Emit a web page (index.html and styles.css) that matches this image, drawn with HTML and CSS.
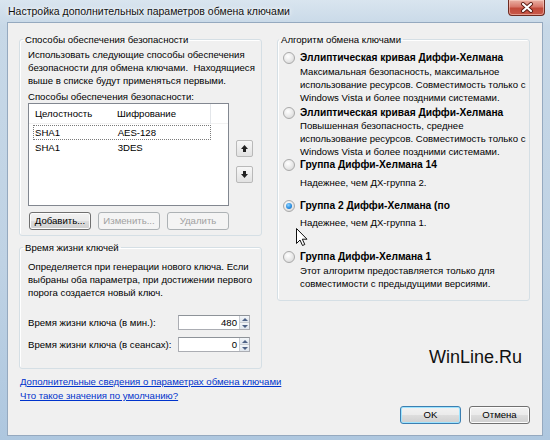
FILE: index.html
```html
<!DOCTYPE html>
<html lang="ru">
<head>
<meta charset="utf-8">
<title>Настройка дополнительных параметров обмена ключами</title>
<link rel="stylesheet" href="styles.css">
</head>
<body>
<div class="window">
  <div class="titlebar">
    <span class="title">Настройка дополнительных параметров обмена ключами</span>
    <button class="close" aria-label="Закрыть">
      <svg width="14" height="11" viewBox="0 0 14 11"><path d="M3 2 L11 9 M11 2 L3 9" stroke="#5a1a12" stroke-width="4" stroke-linecap="round"/><path d="M3 2 L11 9 M11 2 L3 9" stroke="#fff" stroke-width="2.2" stroke-linecap="round"/></svg>
    </button>
  </div>
  <div class="client">
    <div class="col-left">
      <fieldset class="group">
        <legend>Способы обеспечения безопасности</legend>
        <div class="gbody gbody-methods">
          <p class="desc">Использовать следующие способы обеспечения<br>безопасности для обмена ключами.&nbsp; Находящиеся<br>выше в списке будут применяться первыми.</p>
          <p class="caption">Способы обеспечения безопасности:</p>
          <div class="list-row">
            <div class="listbox">
              <div class="lv-head"><span class="c1">Целостность</span><span class="c2">Шифрование</span><span class="c3"></span></div>
              <div class="lv-item focus"><span class="c1">SHA1</span><span class="c2">AES-128</span></div>
              <div class="lv-item"><span class="c1">SHA1</span><span class="c2">3DES</span></div>
            </div>
            <div class="movers">
              <button class="mover" aria-label="Вверх"><svg width="15" height="15" viewBox="0 0 15 15"><path d="M7.5 4 L11 8 H9 V11 H6 V8 H4 Z" fill="#222"/></svg></button>
              <button class="mover" aria-label="Вниз"><svg width="15" height="15" viewBox="0 0 15 15"><path d="M7.5 11 L11 7 H9 V4 H6 V7 H4 Z" fill="#222"/></svg></button>
            </div>
          </div>
          <div class="btn-row">
            <button class="btn">Добавить...</button>
            <button class="btn" disabled>Изменить...</button>
            <button class="btn" disabled>Удалить</button>
          </div>
        </div>
      </fieldset>
      <fieldset class="group group-life">
        <legend>Время жизни ключей</legend>
        <div class="gbody gbody-life">
          <p class="desc">Определяется при генерации нового ключа. Если<br>выбраны оба параметра, при достижении первого<br>порога создается новый ключ.</p>
          <div class="field field-first">
            <span class="flabel">Время жизни ключа (в мин.):</span>
            <div class="spin"><span class="val">480</span><span class="arrows"><span class="ar ar-up"></span><span class="ar ar-down"></span></span></div>
          </div>
          <div class="field">
            <span class="flabel">Время жизни ключа (в сеансах):</span>
            <div class="spin"><span class="val">0</span><span class="arrows"><span class="ar ar-up"></span><span class="ar ar-down"></span></span></div>
          </div>
        </div>
      </fieldset>
      <div class="links">
        <a href="#">Дополнительные сведения о параметрах обмена ключами</a>
        <a href="#">Что такое значения по умолчанию?</a>
      </div>
    </div>
    <div class="col-right">
      <fieldset class="group group-algo">
        <legend>Алгоритм обмена ключами</legend>
        <div class="gbody gbody-algo">
          <div class="opt opt-1">
            <span class="radio"></span>
            <span class="opt-title">Эллиптическая кривая Диффи-Хелмана</span>
            <span class="opt-desc">Максимальная безопасность, максимальное<br>использование ресурсов. Совместимость только с<br>Windows Vista и более поздними системами.</span>
          </div>
          <div class="opt opt-2">
            <span class="radio"></span>
            <span class="opt-title">Эллиптическая кривая Диффи-Хелмана</span>
            <span class="opt-desc">Повышенная безопасность, среднее<br>использование ресурсов. Совместимость только с<br>Windows Vista и более поздними системами.</span>
          </div>
          <div class="opt opt-3">
            <span class="radio"></span>
            <span class="opt-title">Группа Диффи-Хелмана 14</span>
            <span class="opt-desc">Надежнее, чем ДХ-группа 2.</span>
          </div>
          <div class="opt opt-4">
            <span class="radio checked"></span>
            <span class="opt-title">Группа 2 Диффи-Хелмана (по</span>
            <span class="opt-desc">Надежнее, чем ДХ-группа 1.</span>
          </div>
          <div class="opt opt-5">
            <span class="radio"></span>
            <span class="opt-title">Группа Диффи-Хелмана 1</span>
            <span class="opt-desc">Этот алгоритм предоставляется только для<br>совместимости с предыдущими версиями.</span>
          </div>
        </div>
      </fieldset>
      <div class="dlg-buttons">
        <button class="btn btn-default">OK</button>
        <button class="btn">Отмена</button>
      </div>
    </div>
    <div class="watermark">WinLine.Ru</div>
    <svg class="cursor" width="12" height="19" viewBox="0 0 12 19"><path d="M0.5 0.5 V15.5 L4 12 L6.5 17.5 L8.8 16.5 L6.3 11.2 H11 Z" fill="#fff" stroke="#111" stroke-width="1" stroke-linejoin="round"/></svg>
  </div>
</div>
</body>
</html>
```
FILE: styles.css
```css
* { box-sizing: border-box; }

html, body {
  margin: 0;
  padding: 0;
}

body {
  width: 550px;
  height: 440px;
  overflow: hidden;
  font-family: "Liberation Sans", Arial, sans-serif;
  font-size: 9.6px;
  color: #000;
}

.window {
  width: 550px;
  height: 440px;
  display: flex;
  flex-direction: column;
  padding: 0 7px 4px 7px;
  background: linear-gradient(180deg, #d9e5ef 0%, #c7d8e7 6%, #bfd2e4 60%, #aec7df 100%);
}

.titlebar {
  height: 22px;
  display: flex;
  align-items: flex-start;
  justify-content: space-between;
  padding-left: 1px;
}

.title {
  font-size: 10.5px;
  line-height: 23px;
  color: #111;
  text-shadow: 0 0 6px #fff, 0 0 3px #fff;
}

.close {
  width: 37px;
  height: 16px;
  margin-right: -2px;
  padding: 0;
  border: 1px solid #6e2b21;
  border-top: none;
  border-radius: 0 0 4px 4px;
  background: linear-gradient(180deg, #eab1a4 0%, #d8776a 45%, #c24a3a 55%, #c8594a 100%);
  box-shadow: inset 0 0 0 1px rgba(255, 220, 210, 0.5);
  display: flex;
  align-items: center;
  justify-content: center;
}

.client {
  position: relative;
  flex: 1;
  background: #f0f0f0;
  border: 1px solid #95a9bf;
  display: grid;
  grid-template-columns: 243px 253px;
  column-gap: 15px;
  padding: 10px 0 0 11px;
}

.col-left, .col-right {
  display: flex;
  flex-direction: column;
}

.group {
  margin: 0;
  padding: 0;
  min-width: 0;
  border: 1px solid #d5dfe5;
  border-radius: 3px;
  box-shadow: inset 1px 1px 0 #fff;
}

.group legend {
  margin-left: 3px;
  padding: 0 2px;
  line-height: 13px;
  color: #000;
}

.group-algo legend {
  margin-left: 1px;
}

.group-life {
  margin-top: 5px;
}

.gbody-methods {
  padding: 2px 8px 5px 8px;
}

.gbody-life {
  padding: 6px 8px 16px 8px;
}

.gbody-algo {
  padding: 5px 5px 10px 5px;
}

.desc, .caption {
  margin: 0;
  line-height: 13px;
  white-space: nowrap;
}

.caption {
  margin-top: 3px;
}

.list-row {
  display: flex;
  align-items: flex-start;
}

.listbox {
  width: 201px;
  height: 103px;
  background: #fff;
  border: 1px solid #828790;
}

.lv-head {
  height: 20px;
  display: flex;
  align-items: center;
  border-bottom: 1px solid #f2f2f2;
}

.lv-head span {
  height: 20px;
  line-height: 20px;
}

.c1 {
  width: 83px;
  padding-left: 6px;
}

.c2 {
  width: 99px;
  padding-left: 5px;
}

.lv-head .c2 {
  border-right: 1px solid #e3e6ea;
}

.lv-head .c3 {
  flex: 1;
}

.lv-item {
  height: 15px;
  line-height: 13px;
  display: flex;
  margin: 0 17px 0 4px;
  border: 1px dotted transparent;
}

.lv-item .c1 {
  width: 80px;
  padding-left: 1px;
}

.lv-item.focus {
  margin-top: 1px;
  border-color: #7a7a7a;
}

.movers {
  display: flex;
  flex-direction: column;
  gap: 9px;
  margin-left: 7px;
  padding-top: 37px;
}

.mover {
  width: 17px;
  height: 17px;
  padding: 0;
  border: 1px solid #b9b9b9;
  border-radius: 2px;
  background: linear-gradient(180deg, #f7f7f7 0%, #ececec 50%, #e2e2e2 100%);
  display: flex;
  align-items: center;
  justify-content: center;
}

.btn-row {
  display: flex;
  gap: 7px;
  margin-top: 6px;
  padding-left: 1px;
}

.btn {
  width: 62px;
  height: 18px;
  padding: 0;
  font: inherit;
  color: #000;
  border: 1px solid #707070;
  border-radius: 3px;
  background: linear-gradient(180deg, #f2f2f2 0%, #ebebeb 48%, #dddddd 52%, #cfcfcf 100%);
  box-shadow: inset 0 0 0 1px #fcfcfc;
  line-height: 16px;
}

.btn:disabled {
  color: #a0a0a0;
  border-color: #adb2b5;
  background: #f4f4f4;
  box-shadow: none;
}

.field {
  display: flex;
  align-items: center;
  height: 15px;
  margin-top: 7px;
}

.field-first {
  margin-top: 16px;
}

.flabel {
  flex: 1;
  white-space: nowrap;
}

.spin {
  width: 72px;
  height: 15px;
  margin-right: 3px;
  display: flex;
  background: #fff;
  border: 1px solid #abadb3;
  border-top-color: #8e9399;
}

.val {
  flex: 1;
  text-align: right;
  line-height: 13px;
  padding-right: 2px;
}

.arrows {
  width: 10px;
  display: flex;
  flex-direction: column;
  border-left: 1px solid #c8ccd2;
}

.ar {
  flex: 1;
  display: flex;
  align-items: center;
  justify-content: center;
  background: linear-gradient(180deg, #f3f6f9, #dfe5ec);
}

.ar-up {
  border-bottom: 1px solid #c8ccd2;
}

.ar-up::after, .ar-down::after {
  content: "";
  width: 0;
  height: 0;
  border-left: 3px solid transparent;
  border-right: 3px solid transparent;
}

.ar-up::after {
  border-bottom: 3px solid #4d6185;
}

.ar-down::after {
  border-top: 3px solid #4d6185;
}

.links {
  display: flex;
  flex-direction: column;
  margin-top: 6px;
  padding-left: 1px;
}

.links a {
  color: #0033cc;
  text-decoration: underline;
  line-height: 14px;
  white-space: nowrap;
}

.opt {
  display: grid;
  grid-template-columns: 17px 1fr;
}

.radio {
  grid-row: 1;
  grid-column: 1;
  width: 12px;
  height: 12px;
  margin-top: 0.5px;
  border-radius: 50%;
  border: 1px solid #a9a9a9;
  background: radial-gradient(circle at 40% 35%, #ffffff 0%, #ececec 45%, #d2d2d2 100%);
  display: flex;
  align-items: center;
  justify-content: center;
}

.radio.checked::after {
  content: "";
  width: 6px;
  height: 6px;
  border-radius: 50%;
  background: radial-gradient(circle at 40% 35%, #8fd3ff 0%, #2b8ee0 55%, #1366b5 100%);
}

.opt-title {
  grid-row: 1;
  grid-column: 2;
  font-weight: bold;
  font-size: 10.2px;
  line-height: 13px;
  white-space: nowrap;
}

.opt-desc {
  grid-row: 2;
  grid-column: 2;
  line-height: 13px;
  margin-top: 1px;
  white-space: nowrap;
}

.opt-1 { margin-top: 0; }
.opt-2 { margin-top: 2px; }
.opt-2 .opt-desc { margin-top: 0; }
.opt-3 .opt-desc { margin-top: 5px; }
.opt-4 { margin-top: 10px; }
.opt-4 .opt-desc { margin-top: 4px; }
.opt-5 { margin-top: 21px; }

.dlg-buttons {
  margin-top: auto;
  margin-bottom: 11px;
  display: flex;
  justify-content: flex-end;
  gap: 8px;
}

.dlg-buttons .btn {
  width: 61px;
}

.btn-default {
  border-color: #3c7fb1;
  box-shadow: inset 0 0 0 1px #9ee4ff;
}

.watermark {
  position: absolute;
  left: 421px;
  top: 323px;
  font-family: "Liberation Sans", Arial, sans-serif;
  font-size: 18px;
  line-height: 22px;
  color: #111;
}

.cursor {
  position: absolute;
  left: 288px;
  top: 205px;
}
```
